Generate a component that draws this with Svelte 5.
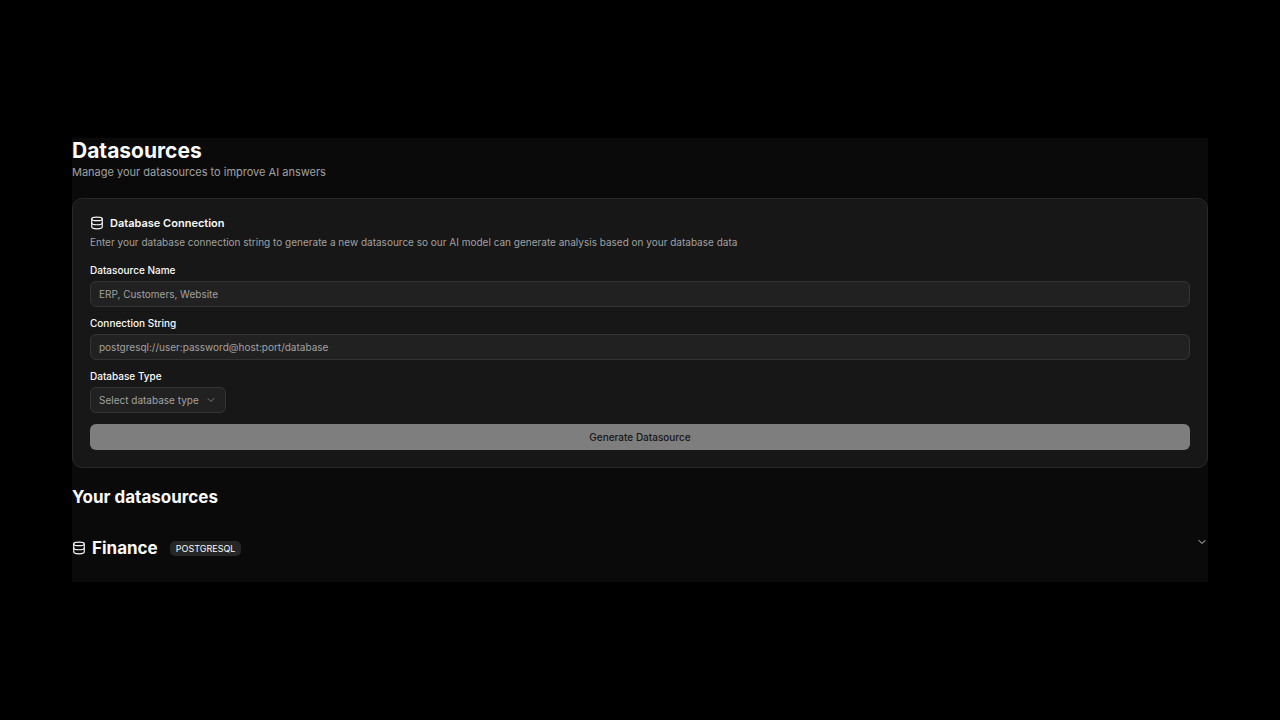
<script lang="ts">
  const TYPES = [
    { value: "postgresql", label: "PostgreSQL" },
    { value: "mysql", label: "MySQL" },
  ];

  let name = $state("");
  let connection = $state("");
  let type = $state("");
  let openId = $state(null);
  let datasources = $state([{ id: 1, name: "Finance", type: "postgresql" }]);

  let canSubmit = $derived(name !== "" && connection !== "" && type !== "");

  function generate(e) {
    e.preventDefault();
    if (!canSubmit) {
      return;
    }
    datasources.push({ id: datasources.length + 1, name, type });
    name = "";
    connection = "";
    type = "";
  }

  function toggle(id) {
    openId = openId === id ? null : id;
  }
</script>

{#snippet databaseIcon()}
  <svg class="database" viewBox="0 0 24 24" aria-hidden="true">
    <ellipse cx="12" cy="5" rx="9" ry="3" />
    <path d="M3 5v14a9 3 0 0 0 18 0V5" />
    <path d="M3 12a9 3 0 0 0 18 0" />
  </svg>
{/snippet}

{#snippet chevron()}
  <svg class="chevron" viewBox="0 0 24 24" aria-hidden="true">
    <path d="m6 9 6 6 6-6" />
  </svg>
{/snippet}

<div class="screen">
  <main>
    <header>
      <h1>Datasources</h1>
      <p>Manage your datasources to improve AI answers</p>
    </header>

    <section class="card">
      <h2>{@render databaseIcon()} Database Connection</h2>
      <p class="description">
        Enter your database connection string to generate a new datasource so
        our AI model can generate analysis based on your database data
      </p>

      <form onsubmit={generate}>
        <div class="field">
          <label for="name">Datasource Name</label>
          <input id="name" bind:value={name} placeholder="ERP, Customers, Website" />
        </div>
        <div class="field">
          <label for="connection">Connection String</label>
          <input
            id="connection"
            bind:value={connection}
            placeholder="postgresql://user:password@host:port/database"
          />
        </div>
        <div class="field">
          <label for="type">Database Type</label>
          <div class="select">
            <select id="type" class:empty={type === ""} bind:value={type}>
              <option value="" disabled hidden>Select database type</option>
              {#each TYPES as t}
                <option value={t.value}>{t.label}</option>
              {/each}
            </select>
            {@render chevron()}
          </div>
        </div>
        <button class="submit" disabled={!canSubmit}>Generate Datasource</button>
      </form>
    </section>

    <section class="list">
      <h2>Your datasources</h2>
      {#each datasources as source (source.id)}
        <button
          class="source"
          aria-expanded={openId === source.id}
          onclick={() => toggle(source.id)}
        >
          {@render databaseIcon()}
          <span class="name">{source.name}</span>
          <span class="badge">{source.type.toUpperCase()}</span>
          {@render chevron()}
        </button>
      {/each}
    </section>
  </main>
</div>

<style>
  :global(body) {
    background: #000;
  }

  .screen {
    box-sizing: border-box;
    min-height: 100vh;
    padding: 0 72px;
    display: flex;
    flex-direction: column;
    justify-content: center;
    color: #fafafa;
    font-family: Inter, sans-serif;
    font-size: 10px;
  }

  main {
    background: #0a0a0a;
  }

  h1,
  h2,
  p {
    margin: 0;
  }

  h1 {
    font-size: 21px;
    line-height: 26px;
    font-weight: 700;
  }

  header p {
    font-size: 11px;
    line-height: 17px;
    color: #a1a1a1;
  }

  svg {
    flex: none;
    fill: none;
    stroke: currentColor;
    stroke-width: 2;
    stroke-linecap: round;
    stroke-linejoin: round;
  }

  .database {
    width: 14px;
    height: 14px;
  }

  .chevron {
    width: 12px;
    height: 12px;
    color: #a1a1a1;
  }

  .card {
    margin-top: 17px;
    padding: 17px;
    border: 1px solid #282828;
    border-radius: 10px;
    background: #171717;
  }

  .card h2 {
    display: flex;
    align-items: center;
    gap: 6px;
    font-size: 11px;
    line-height: 14px;
    font-weight: 600;
  }

  .description {
    margin-top: 5px;
    font-size: 10px;
    line-height: 15px;
    color: #a1a1a1;
  }

  form {
    display: flex;
    flex-direction: column;
    gap: 11px;
    margin-top: 15px;
  }

  .field {
    display: flex;
    flex-direction: column;
    gap: 5px;
  }

  label {
    font-size: 10px;
    line-height: 11px;
    font-weight: 500;
  }

  input,
  select {
    box-sizing: border-box;
    width: 100%;
    height: 26px;
    padding: 0 8px;
    border: 1px solid #343434;
    border-radius: 6px;
    background: #212121;
    color: #fafafa;
    font: inherit;
  }

  input::placeholder {
    color: #a1a1a1;
  }

  .select {
    position: relative;
    align-self: flex-start;
  }

  select {
    appearance: none;
    padding-right: 26px;
  }

  select.empty {
    color: #a1a1a1;
  }

  .select .chevron {
    position: absolute;
    top: 7px;
    right: 9px;
    opacity: 0.7;
    pointer-events: none;
  }

  .submit {
    height: 26px;
    border: 0;
    border-radius: 6px;
    background: #e5e5e5;
    color: #171717;
    font: inherit;
    font-weight: 500;
  }

  .submit:disabled {
    background: #7e7e7e;
  }

  .list {
    padding: 17px 0 10px;
  }

  .list h2 {
    font-size: 17px;
    line-height: 24px;
    font-weight: 700;
  }

  .source {
    display: flex;
    align-items: center;
    width: 100%;
    margin-top: 15px;
    padding: 12px 0;
    border: 0;
    background: none;
    color: inherit;
    font: inherit;
    text-align: left;
  }

  .source .name {
    margin-left: 6px;
    font-size: 17px;
    line-height: 24px;
    font-weight: 700;
  }

  .source .chevron {
    align-self: flex-start;
    margin-left: auto;
    color: #d4d4d4;
  }

  .badge {
    margin-left: 12px;
    padding: 0 6px;
    border-radius: 5px;
    background: #262626;
    font-size: 9px;
    line-height: 15px;
  }
</style>
